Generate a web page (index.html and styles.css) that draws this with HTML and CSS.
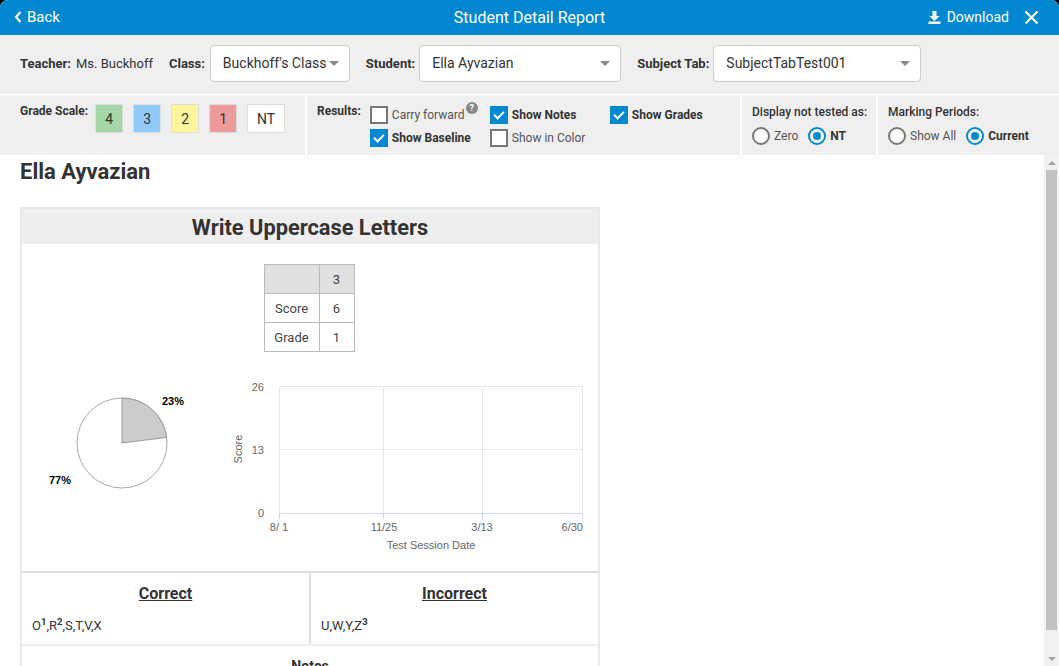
FILE: index.html
```html
<!DOCTYPE html>
<html>
<head>
<meta charset="utf-8">
<link rel="stylesheet" href="styles.css">
</head>
<body>
<div class="modal">
  <header class="topbar">
    <div class="back">
      <svg width="8" height="12" viewBox="0 0 8 12"><path d="M6.5 1 L2 6 L6.5 11" fill="none" stroke="#fff" stroke-width="2.2"/></svg>
      <span>Back</span>
    </div>
    <div class="title">Student Detail Report</div>
    <div class="actions">
      <span class="download">
        <svg width="13" height="13" viewBox="0 0 13 13"><path d="M4.5 0 H8.5 V5 H11.5 L6.5 10 L1.5 5 H4.5 Z" fill="#fff"/><rect x="0.5" y="10.5" width="12" height="2.5" fill="#fff"/></svg>
        Download
      </span>
      <svg class="close" width="15" height="15" viewBox="0 0 15 15"><path d="M1.5 1.5 L13.5 13.5 M13.5 1.5 L1.5 13.5" stroke="#fff" stroke-width="2"/></svg>
    </div>
  </header>

  <div class="filters">
    <span class="lbl">Teacher:</span><span class="val">Ms. Buckhoff</span>
    <span class="lbl lbl-class">Class:</span>
    <div class="select sel-class"><span>Buckhoff's Class</span><i class="caret"></i></div>
    <span class="lbl lbl-student">Student:</span>
    <div class="select sel-student"><span>Ella Ayvazian</span><i class="caret"></i></div>
    <span class="lbl lbl-subject">Subject Tab:</span>
    <div class="select sel-subject"><span>SubjectTabTest001</span><i class="caret"></i></div>
  </div>

  <div class="options">
    <div class="opt opt-grade">
      <span class="lbl-s">Grade Scale:</span>
      <div class="scale">
        <span class="chip g4">4</span>
        <span class="chip g3">3</span>
        <span class="chip g2">2</span>
        <span class="chip g1">1</span>
        <span class="chip gnt">NT</span>
      </div>
    </div>
    <div class="opt opt-results">
      <span class="lbl-s">Results:</span>
      <div class="checks">
        <label class="cb"><i class="box"></i><span>Carry forward</span><i class="help">?</i></label>
        <label class="cb on"><i class="box"></i><span>Show Notes</span></label>
        <label class="cb on"><i class="box"></i><span>Show Grades</span></label>
        <label class="cb on"><i class="box"></i><span>Show Baseline</span></label>
        <label class="cb"><i class="box"></i><span>Show in Color</span></label>
      </div>
    </div>
    <div class="opt opt-display">
      <span class="lbl2">Display not tested as:</span>
      <div class="radios">
        <label class="rd"><i class="dot"></i><span>Zero</span></label>
        <label class="rd on"><i class="dot"></i><span>NT</span></label>
      </div>
    </div>
    <div class="opt opt-marking">
      <span class="lbl2">Marking Periods:</span>
      <div class="radios">
        <label class="rd"><i class="dot"></i><span>Show All</span></label>
        <label class="rd on"><i class="dot"></i><span>Current</span></label>
      </div>
    </div>
  </div>

  <div class="viewport">
    <main class="content">
      <h1 class="student">Ella Ayvazian</h1>
      <section class="card">
        <h2 class="card-title">Write Uppercase Letters</h2>
        <div class="card-body">
          <table class="scores">
            <tr class="head"><td></td><td>3</td></tr>
            <tr><td>Score</td><td>6</td></tr>
            <tr><td>Grade</td><td>1</td></tr>
          </table>
          <div class="charts">
            <svg class="pie" width="190" height="185" viewBox="0 0 190 185">
              <circle cx="100" cy="69" r="45" fill="#fff" stroke="#aaa" stroke-width="1"/>
              <path d="M100 69 L100 24 A45 45 0 0 1 144.65 63.36 Z" fill="#ccc" stroke="#999" stroke-width="1"/>
              <text x="140" y="31" class="pl">23%</text>
              <text x="27" y="110" class="pl">77%</text>
            </svg>
            <svg class="line" width="386" height="185" viewBox="0 0 386 185">
              <g stroke="#e6e6e6" stroke-width="1">
                <line x1="67.5" y1="12" x2="67.5" y2="139"/>
                <line x1="171.5" y1="12" x2="171.5" y2="139"/>
                <line x1="270.5" y1="12" x2="270.5" y2="139"/>
                <line x1="370.5" y1="12" x2="370.5" y2="139"/>
                <line x1="67" y1="12.5" x2="371" y2="12.5"/>
                <line x1="67" y1="75.5" x2="371" y2="75.5"/>
              </g>
              <line x1="67" y1="139.5" x2="371" y2="139.5" stroke="#ccd6eb"/>
              <g stroke="#ccd6eb">
                <line x1="67.5" y1="139" x2="67.5" y2="145"/>
                <line x1="171.5" y1="139" x2="171.5" y2="145"/>
                <line x1="270.5" y1="139" x2="270.5" y2="145"/>
                <line x1="370.5" y1="139" x2="370.5" y2="145"/>
              </g>
              <g class="ax" text-anchor="end">
                <text x="52" y="17">26</text>
                <text x="52" y="80">13</text>
                <text x="52" y="143">0</text>
              </g>
              <g class="ax" text-anchor="middle">
                <text x="67" y="157">8/ 1</text>
                <text x="172" y="157">11/25</text>
                <text x="270" y="157">3/13</text>
                <text x="371" y="157" text-anchor="end">6/30</text>
                <text x="219" y="175">Test Session Date</text>
                <text transform="translate(30 75) rotate(-90)">Score</text>
              </g>
            </svg>
          </div>
        </div>
        <div class="results">
          <div class="res">
            <h3>Correct</h3>
            <p>O<sup>1</sup>,R<sup>2</sup>,S,T,V,X</p>
          </div>
          <div class="res">
            <h3>Incorrect</h3>
            <p>U,W,Y,Z<sup>3</sup></p>
          </div>
        </div>
        <div class="notes">
          <h3>Notes</h3>
        </div>
      </section>
    </main>
    <div class="scrollbar">
      <div class="sb-btn up"></div>
      <div class="sb-track"><div class="sb-thumb"></div></div>
      <div class="sb-btn down"></div>
    </div>
  </div>
</div>
</body>
</html>
```

FILE: styles.css
```css
* { box-sizing: border-box; }
html, body { margin: 0; padding: 0; background: #000; }
body { font-family: Roboto, "Liberation Sans", Arial, sans-serif; color: #333; }

.modal {
  width: 1059px;
  height: 666px;
  display: flex;
  flex-direction: column;
  background: #fff;
  border-radius: 8px 8px 0 0;
  overflow: hidden;
}

.topbar {
  height: 35px;
  flex: none;
  background: #0288d1;
  color: #fff;
  display: flex;
  align-items: center;
  justify-content: space-between;
  padding: 0 20px 1px 14px;
  font-size: 15px;
  position: relative;
}
.back { display: flex; align-items: center; gap: 5px; }
.back span { font-size: 15px; }
.title {
  position: absolute;
  left: 0; right: 0;
  text-align: center;
  font-size: 16px;
  pointer-events: none;
}
.actions { display: flex; align-items: center; gap: 15px; position: relative; }
.download { display: flex; align-items: center; gap: 6px; font-size: 14px; }

.filters {
  height: 59px;
  flex: none;
  background: #efefef;
  display: flex;
  align-items: center;
  padding: 0 20px 3px;
  margin-bottom: 1px;
}
.lbl { font-size: 13px; font-weight: 700; color: #333; white-space: nowrap; }
.val { font-size: 13px; margin-left: 5px; color: #333; white-space: nowrap; }
.lbl-class { margin-left: 16px; margin-right: 5px; }
.lbl-student { margin-left: 16px; margin-right: 4px; }
.lbl-subject { margin-left: 16px; margin-right: 4px; }
.select {
  height: 37px;
  flex: none;
  background: #fff;
  border: 1px solid #ccc;
  border-radius: 4px;
  display: flex;
  align-items: center;
  justify-content: space-between;
  padding: 0 10px 0 12px;
  font-size: 14px;
  color: #333;
}
.sel-class { width: 140px; }
.sel-student { width: 202px; }
.sel-subject { width: 208px; }
.caret {
  width: 0; height: 0;
  border-left: 5px solid transparent;
  border-right: 5px solid transparent;
  border-top: 5px solid #888;
}

.options {
  height: 60px;
  flex: none;
  display: flex;
  gap: 2px;
  background: #fff;
}
.opt { background: #efefef; padding: 9px 10px 0; }
.opt-grade { width: 305px; padding-left: 20px; display: flex; align-items: flex-start; }
.opt-results { width: 433px; display: flex; align-items: flex-start; }
.opt-display { width: 134px; }
.opt-marking { flex: 1; }
.lbl-s { font-size: 12px; font-weight: 700; color: #333; white-space: nowrap; }

.scale { display: flex; gap: 10px; margin-left: 7px; }
.chip {
  height: 29px;
  width: 28px;
  border: 1px solid #ddd;
  display: flex;
  align-items: center;
  justify-content: center;
  font-size: 14px;
  color: #333;
}
.g4 { background: #a5d6a7; }
.g3 { background: #90caf9; }
.g2 { background: #fff59d; }
.g1 { background: #ef9a9a; }
.gnt { background: #fff; width: 38px; }

.opt-results .lbl-s { margin-right: 9px; }
.checks {
  display: grid;
  grid-template-columns: 120px 120px 120px;
  row-gap: 5px;
  margin-top: 2px;
}
.cb { display: flex; align-items: center; gap: 4px; font-size: 12px; color: #555; height: 18px; position: relative; white-space: nowrap; }
.cb.on span { font-weight: 700; color: #333; }
.box {
  width: 18px; height: 18px;
  border: 2px solid #777;
  background: #fff;
  flex: none;
  position: relative;
}
.cb.on .box { background: #0288d1; border-color: #0288d1; }
.cb.on .box::after {
  content: "";
  position: absolute;
  left: 4px; top: 1px;
  width: 4px; height: 8px;
  border-right: 2px solid #fff;
  border-bottom: 2px solid #fff;
  transform: rotate(45deg);
}
.help {
  position: absolute;
  left: 96px; top: -4px;
  width: 12px; height: 12px;
  border-radius: 50%;
  background: #888;
  color: #fff;
  font-size: 9px;
  font-weight: 700;
  font-style: normal;
  display: flex;
  align-items: center;
  justify-content: center;
}

.lbl2 { font-size: 12px; font-weight: 500; color: #333; display: block; margin-top: 1px; white-space: nowrap; }
.radios { display: flex; gap: 10px; margin-top: 8px; }
.rd { display: flex; align-items: center; gap: 4px; font-size: 12px; color: #555; white-space: nowrap; }
.rd.on span { font-weight: 700; color: #333; }
.dot {
  width: 18px; height: 18px;
  border-radius: 50%;
  border: 2px solid #777;
  background: #fff;
  position: relative;
  flex: none;
}
.rd.on .dot { border-color: #0288d1; }
.rd.on .dot::after {
  content: "";
  position: absolute;
  left: 3px; top: 3px;
  width: 8px; height: 8px;
  border-radius: 50%;
  background: #0288d1;
}

.viewport {
  flex: 1;
  min-height: 0;
  display: flex;
  background: #fff;
}
.content {
  flex: 1;
  min-width: 0;
  overflow: hidden;
  padding: 0 20px;
}
.scrollbar {
  width: 15px;
  flex: none;
  display: flex;
  flex-direction: column;
  background: #f1f1f1;
}
.sb-btn {
  height: 15px;
  flex: none;
  display: flex;
  align-items: center;
  justify-content: center;
}
.sb-btn::before {
  content: "";
  width: 0; height: 0;
  border-left: 4px solid transparent;
  border-right: 4px solid transparent;
}
.sb-btn.up::before { border-bottom: 4px solid #a3a3a3; }
.sb-btn.down::before { border-top: 4px solid #a3a3a3; }
.sb-track { flex: 1; padding: 0 2px; }
.sb-thumb { height: 460px; background: #c1c1c1; }

.student {
  margin: 4px 0 0;
  font-size: 22px;
  line-height: 26px;
  font-weight: 700;
  color: #333;
}
.card {
  width: 580px;
  margin-top: 22px;
  border: 2px solid #e8e8e8;
  border-bottom: none;
}
.card-title {
  margin: 0;
  height: 35px;
  background: #eee;
  font-size: 21.8px;
  font-weight: 700;
  text-align: center;
  line-height: 37px;
  color: #333;
}
.card-body {
  padding: 20px 0 12px;
  display: flex;
  flex-direction: column;
  align-items: center;
}
.scores {
  border-collapse: collapse;
  font-size: 13px;
  color: #444;
  margin-left: -2px;
}
.scores td {
  border: 1px solid #bbb;
  height: 29px;
  text-align: center;
  padding: 0;
}
.scores td:first-child { width: 55px; }
.scores td:last-child { width: 35px; }
.scores .head td { background: #e0e0e0; }
.charts {
  display: flex;
  align-self: stretch;
  margin-top: 22px;
}
.pie .pl { font-family: "Liberation Sans", Arial, sans-serif; font-size: 11px; font-weight: 700; fill: #000; }
.ax text { font-family: "Liberation Sans", Arial, sans-serif; font-size: 11px; fill: #666; }

.results {
  display: flex;
  border-top: 2px solid #ddd;
}
.res { flex: 1; height: 71px; padding: 10px 10px 0; }
.res + .res { border-left: 2px solid #ddd; }
.res h3 {
  margin: 0;
  font-size: 16px;
  font-weight: 700;
  text-decoration: underline;
  text-align: center;
  line-height: 22px;
  color: #333;
}
.res p { margin: 11px 0 0; font-size: 13px; color: #333; }
.res sup { font-size: 9.5px; font-weight: 700; }
.notes { border-top: 2px solid #eee; padding: 12px 0 14px; }
.notes h3 { margin: 0; text-align: center; font-size: 14px; font-weight: 700; }
```
